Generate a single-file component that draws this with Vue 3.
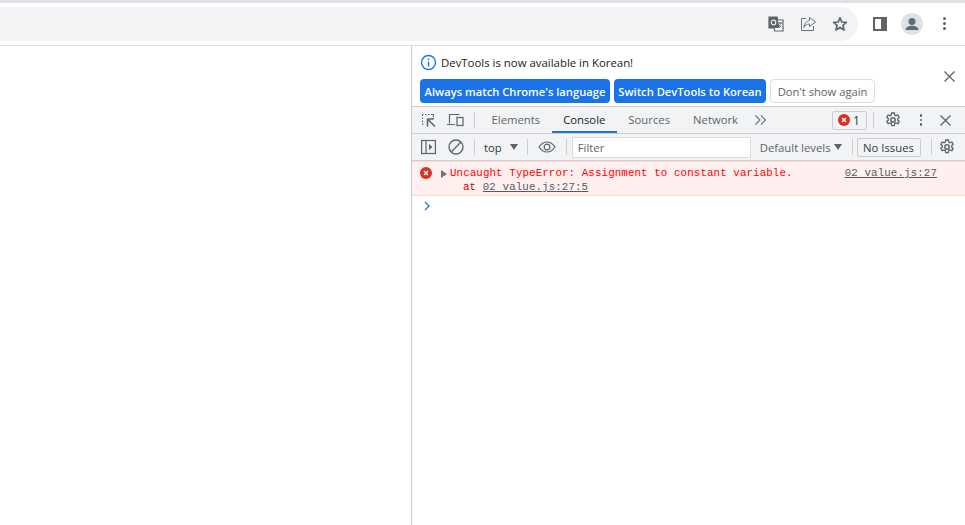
<template>
  <div class="window">
    <div class="strip" />
    <header class="toolbar">
      <div class="omnibox">
        <svg class="ico translate" width="18" height="18" viewBox="0 0 18 18">
          <path d="M2 2h8l1 3h5v11H8l-1-3H2z" fill="#fff" stroke="#5f6368" stroke-width="1.2" />
          <path d="M2 2h8l2.5 11H2z" fill="#5f6368" />
          <circle cx="6.500" cy="7.500" r="2.300" fill="none" stroke="#e8eaed" stroke-width="1.2" />
          <path d="M11 8h4M13 7v1M14 8c-.5 2-2 3.500-3 4M11.500 9.500c.7 1.200 2 2.200 3 2.700" fill="none" stroke="#5f6368" stroke-width="1" />
        </svg>
        <svg class="ico share" width="18" height="18" viewBox="0 0 18 18" fill="none" stroke="#6e7277" stroke-width="1">
          <path d="M7 3.500H2.500v12h12V11" />
          <path d="M10.500 2.500 16.500 7l-6 4.500V9C8 9 6 10 5 12.500 5 8.500 7.500 5.800 10.500 5.500z" stroke-linejoin="round" />
        </svg>
        <svg class="ico star" width="18" height="18" viewBox="0 0 18 18" fill="none" stroke="#5f6368" stroke-width="1.700">
          <path d="M9 2.800 10.800 7l4.600.4-3.500 3 1.100 4.500L9 12.500l-4 2.400 1.100-4.500-3.500-3L7.200 7z" stroke-linejoin="round" />
        </svg>
      </div>
      <div class="side-panel"><span /></div>
      <div class="avatar">
        <svg width="22" height="22" viewBox="0 0 22 22" fill="#5f6b7c">
          <circle cx="11" cy="8.500" r="3.500" />
          <path d="M4.500 17c0-3 4-4.200 6.500-4.200s6.500 1.200 6.500 4.200z" />
        </svg>
      </div>
      <div class="dots"><i /><i /><i /></div>
    </header>

    <main class="content">
      <div class="page" />
      <section class="devtools">
        <div class="infobar">
          <div class="info-row">
            <svg width="17" height="17" viewBox="0 0 17 17" fill="none">
              <circle cx="8.500" cy="8.500" r="7" stroke="#1a73e8" stroke-width="1.400" />
              <path d="M8.500 7.500v5M8.500 4.500v1.600" stroke="#1a73e8" stroke-width="1.500" />
            </svg>
            <span>DevTools is now available in Korean!</span>
          </div>
          <div class="info-actions">
            <button class="primary">Always match Chrome's language</button>
            <button class="primary">Switch DevTools to Korean</button>
            <button class="plain">Don't show again</button>
          </div>
          <svg class="info-close" width="11" height="11" viewBox="0 0 11 11" stroke="#5f6368" stroke-width="1.300">
            <path d="M.5.500l10 10M10.500.500l-10 10" />
          </svg>
        </div>

        <div class="tabs">
          <svg class="t-inspect" width="18" height="18" viewBox="0 0 18 18" fill="none" stroke="#5f6368">
            <path d="M3.500 13.500h-1v-1M2.500 11V9.500M2.500 8V6.500M2.500 5V3.500h1M5 3.500h1.500M8 3.500h1.500M11 3.500h2.500V6M13.500 7v1" stroke-width="1" />
            <path d="M7.500 8v7.500M7.500 8h6M8 8.500l7 7" stroke-width="1.500" />
          </svg>
          <svg class="t-device" width="20" height="18" viewBox="0 0 20 18" fill="none" stroke="#5f6368" stroke-width="1.200">
            <path d="M3.500 12.500V3.500h10M1 13.500h8" />
            <rect x="11" y="6.500" width="6" height="8" />
          </svg>
          <span class="sep tab-sep" />
          <span class="tab first">Elements</span>
          <span class="tab active">Console</span>
          <span class="tab">Sources</span>
          <span class="tab">Network</span>
          <svg class="more" width="14" height="12" viewBox="0 0 14 12" fill="none" stroke="#6e7277" stroke-width="1.100">
            <path d="M1.500 1.500 6 6l-4.500 4.500M7 1.500 11.500 6 7 10.500" />
          </svg>
          <div class="spacer" />
          <div class="error-count">
            <svg width="12" height="12" viewBox="0 0 12 12">
              <circle cx="6" cy="6" r="6" fill="#d93025" />
              <path d="M4 4l4 4M8 4 4 8" stroke="#fff" stroke-width="1.300" />
            </svg>
            <span>1</span>
          </div>
          <span class="sep count-sep" />
          <svg class="gear g1" width="16" height="16" viewBox="0 0 16 16" fill="none" stroke="#5f6368">
            <path d="M6.700 1h2.600l.4 2 1.300.7 1.900-.7 1.300 2.300-1.500 1.300v1.500l1.500 1.300-1.300 2.300-1.900-.7-1.300.7-.4 2H6.700l-.4-2-1.300-.7-1.900.7-1.300-2.300 1.500-1.300V6.600L1.800 5.300 3.100 3l1.900.7 1.300-.7z" stroke-width="1.300" />
            <circle cx="8" cy="8" r="2.200" stroke-width="1.500" />
          </svg>
          <div class="v-dots"><i /><i /><i /></div>
          <svg class="tabs-close" width="11" height="11" viewBox="0 0 11 11" stroke="#5f6368" stroke-width="1.300">
            <path d="M.5.500l10 10M10.500.500l-10 10" />
          </svg>
        </div>

        <div class="filters">
          <svg class="f-side" width="15" height="16" viewBox="0 0 15 16" fill="none">
            <rect x=".6" y="1.500" width="13.800" height="13" stroke="#5f6368" stroke-width="1.200" />
            <path d="M5 1.500v13" stroke="#5f6368" stroke-width="1.200" />
            <path d="M8 5l3.500 3L8 11z" fill="#5f6368" />
          </svg>
          <svg class="f-clear" width="16" height="16" viewBox="0 0 16 16" fill="none" stroke="#5f6368" stroke-width="1.300">
            <circle cx="8" cy="8" r="7" />
            <path d="M3.200 13 13 3" />
          </svg>
          <span class="sep s1" />
          <span class="top">top</span>
          <i class="caret top-caret" />
          <span class="sep s2" />
          <svg class="f-eye" width="18" height="12" viewBox="0 0 18 12" fill="none" stroke="#5f6368" stroke-width="1.200">
            <path d="M1 6c2-3 5-5 8-5s6 2 8 5c-2 3-5 5-8 5S3 9 1 6z" />
            <circle cx="9" cy="6" r="2.800" />
          </svg>
          <span class="sep s3" />
          <div class="filter-input">Filter</div>
          <span class="levels">Default levels</span>
          <i class="caret" />
          <span class="sep s4" />
          <div class="issues">No Issues</div>
          <span class="sep s5" />
          <svg class="gear g2" width="16" height="16" viewBox="0 0 16 16" fill="none" stroke="#5f6368">
            <path d="M6.700 1h2.600l.4 2 1.300.7 1.900-.7 1.300 2.300-1.500 1.300v1.500l1.500 1.300-1.300 2.300-1.900-.7-1.300.7-.4 2H6.700l-.4-2-1.300-.7-1.900.7-1.300-2.300 1.500-1.300V6.600L1.800 5.300 3.100 3l1.900.7 1.300-.7z" stroke-width="1.300" />
            <circle cx="8" cy="8" r="2.200" stroke-width="1.500" />
          </svg>
        </div>

        <div class="message">
          <svg class="msg-icon" width="12" height="12" viewBox="0 0 12 12">
            <circle cx="6" cy="6" r="6" fill="#d93025" />
            <path d="M4 4l4 4M8 4 4 8" stroke="#fff" stroke-width="1.300" />
          </svg>
          <i class="expand" />
          <div class="msg-text">
            <div>Uncaught TypeError: Assignment to constant variable.</div>
            <div class="stack">at <a>02 value.js:27:5</a></div>
          </div>
          <a class="msg-source">02 value.js:27</a>
        </div>

        <div class="prompt">
          <svg width="8" height="10" viewBox="0 0 8 10" fill="none" stroke="#1a73e8" stroke-width="1.300">
            <path d="M2 1l4 4-4 4" />
          </svg>
        </div>
      </section>
    </main>
  </div>
</template>

<script setup>
</script>

<style>
html, body {
  margin: 0;
  background: #fff;
  overflow: hidden;
}
</style>

<style scoped>
.window {
  width: 965px;
  height: 525px;
  display: flex;
  flex-direction: column;
  font-family: "Open Sans", "Noto Sans", sans-serif;
  background: #fff;
  overflow: hidden;
}

.strip {
  height: 3px;
  background: #dee1e6;
}

.toolbar {
  height: 42px;
  display: flex;
  align-items: center;
  border-bottom: 1px solid #dadce0;
  box-sizing: content-box;
}

.omnibox {
  width: 858px;
  height: 34px;
  margin-top: -1px;
  display: flex;
  align-items: center;
  justify-content: flex-end;
  gap: 14px;
  padding-right: 9px;
  box-sizing: border-box;
  background: #f1f3f4;
  border-radius: 0 17px 17px 0;
}

.side-panel {
  width: 14px;
  height: 14px;
  margin-left: 15px;
  margin-top: -1px;
  background: #5f6368;
  padding: 2px 6px 2px 2px;
  box-sizing: border-box;
}

.side-panel span {
  display: block;
  width: 100%;
  height: 100%;
  background: #fff;
}

.avatar {
  width: 22px;
  height: 22px;
  margin-left: 14px;
  margin-top: -1px;
  border-radius: 50%;
  background: #dfe1e6;
}

.avatar svg {
  display: block;
}

.dots {
  margin-left: 20px;
  margin-top: -1px;
  display: flex;
  flex-direction: column;
  gap: 2px;
}

.dots i {
  width: 3px;
  height: 3px;
  border-radius: 50%;
  background: #5f6368;
}

.content {
  flex: 1;
  display: flex;
  min-height: 0;
}

.page {
  width: 411px;
  border-right: 1px solid #cbcdd1;
}

.devtools {
  flex: 1;
  min-width: 0;
  display: flex;
  flex-direction: column;
  font-size: 11.300px;
  color: #303942;
}

.infobar {
  position: relative;
  height: 61px;
  padding: 8px 0 0 8px;
  box-sizing: border-box;
  border-bottom: 1px solid #cbcdd1;
}

.info-row {
  display: flex;
  align-items: center;
  gap: 4px;
  height: 17px;
  font-size: 11.400px;
  color: #202124;
}

.info-actions {
  display: flex;
  gap: 4px;
  margin-top: 8px;
}

.info-actions button {
  height: 24px;
  padding: 0 4px;
  font: 600 11.200px "Open Sans", sans-serif;
  border-radius: 4px;
  white-space: nowrap;
}

.primary {
  width: 190px;
  border: 0;
  background: #1a73e8;
  color: #fff;
}

.primary + .primary {
  width: 152px;
}

.info-actions .plain {
  width: 105px;
  background: #fff;
  color: #5f6368;
  border: 1px solid #dadce0;
  font-weight: 400;
}

.info-close {
  position: absolute;
  top: 25px;
  right: 10px;
}

.tabs,
.filters {
  display: flex;
  align-items: center;
  background: #f1f3f4;
  border-bottom: 1px solid #cbcdd1;
  box-sizing: border-box;
}

.tabs {
  height: 27px;
  color: #5f6368;
}

.t-inspect {
  margin-left: 8px;
}

.t-device {
  margin-left: 8px;
}

.sep {
  width: 1px;
  height: 16px;
  background: #cbcdd1;
  flex: none;
}

.tab-sep {
  margin-left: 8px;
}

.tab {
  height: 26px;
  line-height: 26px;
  padding: 0 11.500px;
  box-sizing: border-box;
}

.tab.first {
  margin-left: 5px;
}

.tab.active {
  color: #202124;
  border-bottom: 2px solid #1a73e8;
}

.more {
  margin-left: 4px;
}

.spacer {
  flex: 1;
}

.error-count {
  width: 33px;
  height: 17px;
  display: flex;
  align-items: center;
  justify-content: center;
  gap: 3px;
  border: 1px solid #cbcdd1;
  border-radius: 2px;
  color: #303942;
  font-size: 12px;
}

.count-sep {
  margin-left: 6px;
}

.g1 {
  margin-left: 11px;
}

.v-dots {
  margin-left: 19px;
  display: flex;
  flex-direction: column;
  gap: 2px;
}

.v-dots i {
  width: 2.500px;
  height: 2.500px;
  border-radius: 50%;
  background: #5f6368;
}

.tabs-close {
  margin: 0 14px 0 18px;
}

.filters {
  height: 27px;
  color: #5f6368;
}

.f-side {
  margin-left: 9px;
}

.f-clear {
  margin-left: 12px;
}

.s1 {
  margin-left: 10px;
}

.top {
  margin-left: 9px;
  color: #303942;
}

.caret {
  width: 0;
  height: 0;
  margin-left: 3px;
  border-left: 4.500px solid transparent;
  border-right: 4.500px solid transparent;
  border-top: 6px solid #5f6368;
}

.top-caret {
  margin-left: 8px;
}

.s2 {
  margin-left: 9px;
}

.f-eye {
  margin-left: 10px;
}

.s3 {
  margin-left: 10px;
}

.filter-input {
  width: 179px;
  height: 21px;
  line-height: 20px;
  margin-left: 5px;
  padding-left: 5px;
  box-sizing: border-box;
  background: #fff;
  border: 1px solid #dadce0;
  color: #5f6368;
}

.levels {
  margin-left: 9px;
}

.s4 {
  margin-left: 10px;
}

.issues {
  width: 64px;
  height: 19px;
  line-height: 17px;
  margin-left: 4px;
  text-align: center;
  box-sizing: border-box;
  border: 1px solid #cbcdd1;
  border-radius: 2px;
  color: #303942;
}

.s5 {
  margin-left: 10px;
}

.g2 {
  margin-left: 7px;
}

.message {
  height: 35px;
  position: relative;
  display: flex;
  align-items: flex-start;
  padding: 4px 0 0 8px;
  box-sizing: border-box;
  background: #fff0ef;
  border-bottom: 1px solid #fbd9d5;
  border-top: 1px solid #fbd9d5;
  font: 10.800px/14px "Liberation Mono", monospace;
  letter-spacing: .11px;
  color: #f00;
}

.msg-icon {
  margin-top: 1px;
  flex: none;
}

.expand {
  width: 0;
  height: 0;
  margin: 4px 3px 0 9px;
  border-top: 4px solid transparent;
  border-bottom: 4px solid transparent;
  border-left: 6px solid #6e7277;
}

.msg-text {
  white-space: pre;
}

.stack {
  padding-left: 13px;
  color: #c00;
}

.message a {
  color: #545a63;
  text-decoration: underline;
}

.msg-source {
  margin-left: auto;
  margin-right: 28px;
}

.prompt {
  padding: 5px 0 0 11px;
}

.prompt svg {
  display: block;
}
</style>
